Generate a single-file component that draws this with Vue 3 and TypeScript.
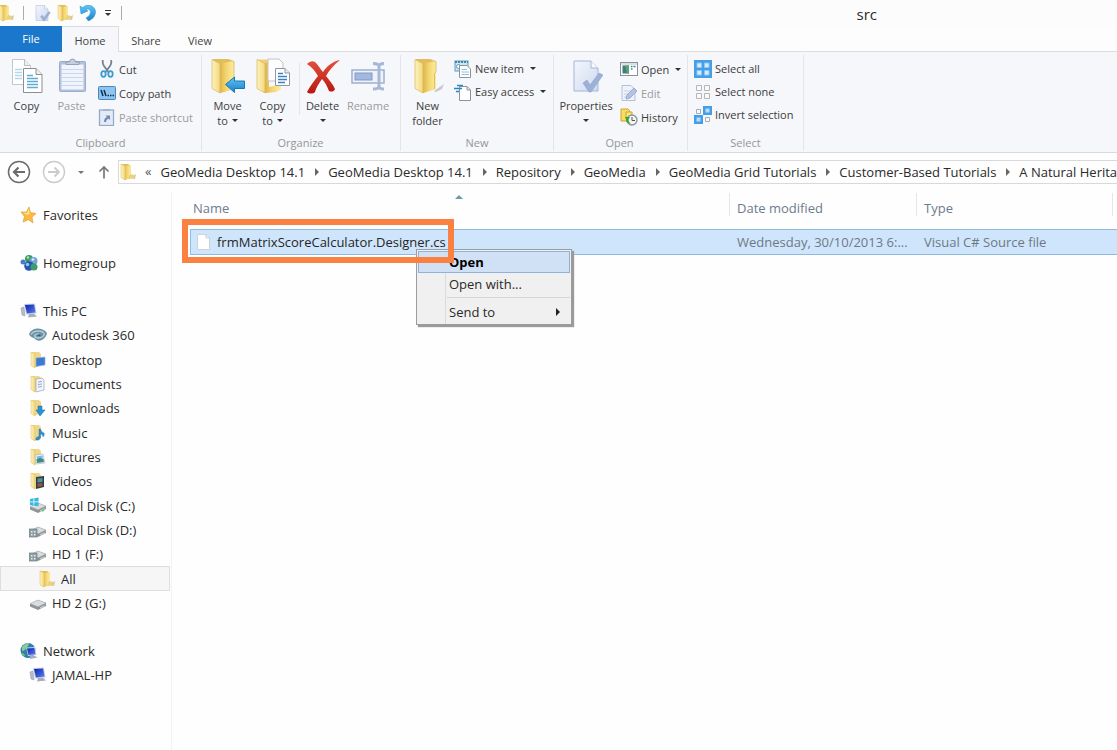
<script setup lang="ts">
import { ref } from 'vue'

interface SmallCommand { label: string; icon: string; disabled?: boolean; menu?: boolean }
interface BigCommand { lines: string[]; icon: string; disabled?: boolean; menu?: boolean; size?: string; divider?: boolean }
interface RibbonGroup { name: string; big: BigCommand[]; small: SmallCommand[] }
interface TreeItem { label: string; icon: string; level: number; selected?: boolean }

const tabs = ['Home', 'Share', 'View']
const activeTab = ref('Home')

const groups: RibbonGroup[] = [
  {
    name: 'Clipboard',
    big: [
      { lines: ['Copy'], icon: 'copy' },
      { lines: ['Paste'], icon: 'paste', disabled: true },
    ],
    small: [
      { label: 'Cut', icon: 'cut' },
      { label: 'Copy path', icon: 'copypath' },
      { label: 'Paste shortcut', icon: 'shortcut', disabled: true },
    ],
  },
  {
    name: 'Organize',
    big: [
      { lines: ['Move', 'to'], icon: 'moveto', menu: true },
      { lines: ['Copy', 'to'], icon: 'copyto', menu: true },
      { lines: ['Delete', ''], icon: 'delete', menu: true, divider: true },
      { lines: ['Rename'], icon: 'rename', disabled: true, size: 'mid' },
    ],
    small: [],
  },
  {
    name: 'New',
    big: [{ lines: ['New', 'folder'], icon: 'folder' }],
    small: [
      { label: 'New item', icon: 'newitem', menu: true },
      { label: 'Easy access', icon: 'easy', menu: true },
    ],
  },
  {
    name: 'Open',
    big: [{ lines: ['Properties', ''], icon: 'props', menu: true, size: 'wide' }],
    small: [
      { label: 'Open', icon: 'open', menu: true },
      { label: 'Edit', icon: 'edit', disabled: true },
      { label: 'History', icon: 'history' },
    ],
  },
  {
    name: 'Select',
    big: [],
    small: [
      { label: 'Select all', icon: 'selall' },
      { label: 'Select none', icon: 'selnone' },
      { label: 'Invert selection', icon: 'selinv' },
    ],
  },
]

const crumbs = [
  'GeoMedia Desktop 14.1',
  'GeoMedia Desktop 14.1',
  'Repository',
  'GeoMedia',
  'GeoMedia Grid Tutorials',
  'Customer-Based Tutorials',
  'A Natural Herita',
]

const tree: TreeItem[][] = [
  [{ label: 'Favorites', icon: 'star', level: 0 }],
  [{ label: 'Homegroup', icon: 'homegroup', level: 0 }],
  [
    { label: 'This PC', icon: 'pc', level: 0 },
    { label: 'Autodesk 360', icon: 'autodesk', level: 1 },
    { label: 'Desktop', icon: 'f-desktop', level: 1 },
    { label: 'Documents', icon: 'f-documents', level: 1 },
    { label: 'Downloads', icon: 'f-downloads', level: 1 },
    { label: 'Music', icon: 'f-music', level: 1 },
    { label: 'Pictures', icon: 'f-pictures', level: 1 },
    { label: 'Videos', icon: 'f-videos', level: 1 },
    { label: 'Local Disk (C:)', icon: 'disk-win', level: 1 },
    { label: 'Local Disk (D:)', icon: 'disk-net', level: 1 },
    { label: 'HD 1 (F:)', icon: 'disk-net', level: 1 },
    { label: 'All', icon: 'folder-s', level: 2, selected: true },
    { label: 'HD 2 (G:)', icon: 'disk', level: 1 },
  ],
  [
    { label: 'Network', icon: 'network', level: 0 },
    { label: 'JAMAL-HP', icon: 'pc', level: 1 },
  ],
]
</script>

<template>
  <svg class="sprite" aria-hidden="true">
    <defs>
      <linearGradient id="gold" x1="0" x2="1"><stop offset="0" stop-color="#dfb548" /><stop offset=".45" stop-color="#f3d672" /><stop offset="1" stop-color="#fcec9f" /></linearGradient>
      <linearGradient id="goldL" x1="0" x2="1"><stop offset="0" stop-color="#fdf3bf" /><stop offset="1" stop-color="#f3d87c" /></linearGradient>
      <linearGradient id="blue" x1="0" y1="0" x2="0" y2="1"><stop offset="0" stop-color="#5cc6f4" /><stop offset="1" stop-color="#1b80c8" /></linearGradient>
      <linearGradient id="red" x1="0" y1="0" x2="0" y2="1"><stop offset="0" stop-color="#e4503c" /><stop offset="1" stop-color="#b81712" /></linearGradient>
      <linearGradient id="steel" x1="0" y1="0" x2="1" y2="1"><stop offset="0" stop-color="#f3f6fc" /><stop offset="1" stop-color="#cfdaf0" /></linearGradient>
      <linearGradient id="screen" x1="0" y1="0" x2="1" y2="1"><stop offset="0" stop-color="#0b1fb0" /><stop offset="1" stop-color="#5b80ee" /></linearGradient>
    </defs>

    <symbol id="folder" viewBox="0 0 34 36">
      <path d="M23 33 L33 26 L31 31 L25 34Z" fill="#a9a9a6" opacity=".6" />
      <path d="M5 1.500 H19 L24 4 V31 L11 35Z" fill="#e3bd55" />
      <path d="M12 5.500 L25 3 V31 L12 35Z" fill="url(#gold)" />
      <path d="M4 1.500 L12 5.500 V35 L4 30.500Z" fill="url(#goldL)" stroke="#d9b55a" stroke-width=".7" />
      <path d="M5 1.500 H19.500 L25 3.500 V14 L23.500 15.500 V31" fill="none" stroke="#d8b65c" stroke-width=".8" />
    </symbol>
    <symbol id="moveto" viewBox="0 0 34 36">
      <path d="M2 1.500 H17 L23 4 V31 L9 35Z" fill="#e3bd55" />
      <path d="M9 5.500 L23 3 V31 L9 35Z" fill="url(#gold)" />
      <path d="M1 1.500 L9 5.500 V35 L1 30.500Z" fill="url(#goldL)" stroke="#d9b55a" stroke-width=".7" />
      <path d="M2 1.500 H17.500 L23 3.500 V20" fill="none" stroke="#d8b65c" stroke-width=".8" />
      <path d="M14.500 26.500 L23.500 19 V23 H33.500 V30.500 H23.500 V34.500Z" fill="url(#blue)" stroke="#1e74b6" stroke-width="1" />
    </symbol>
    <symbol id="copyto" viewBox="0 0 34 36">
      <path d="M2 1.500 H12 V30 L20 29 L24 32 L8 35Z" fill="#efd171" />
      <path d="M9 5.500 L13 4 V29 L25 26 V31 L20 34 L9 35Z" fill="url(#gold)" />
      <path d="M12 1 H23 L27 5 V23 H12Z" fill="#fdfdfd" stroke="#c2c2c2" />
      <path d="M1 1.500 L9 5.500 V35 L1 30.500Z" fill="url(#goldL)" stroke="#d9b55a" stroke-width=".7" />
      <path d="M19.500 10.500 H29 L33.500 15 V27.500 H19.500Z" fill="#fff" stroke="#8d98a5" />
      <path d="M29 10.500 V15 H33.500" fill="#e8eef4" stroke="#8d98a5" />
      <path d="M22 15.500 H27 M22 18.500 H31 M22 21.500 H31 M22 24.500 H29" stroke="#3b82c4" stroke-width="1.300" />
    </symbol>
    <symbol id="copy" viewBox="0 0 34 36">
      <path d="M2.500 1.500 H14.500 L20.500 7.500 V26.500 H2.500Z" fill="#fff" stroke="#c3c7ca" />
      <path d="M14.500 1.500 V7.500 H20.500" fill="#edf0f2" stroke="#b9bec2" />
      <path d="M5 11.500 H12 M5 14.500 H12 M5 17.500 H12 M5 20.500 H12" stroke="#b4d6e6" stroke-width="1.300" />
      <path d="M13.500 10.500 H26 L32 16.500 V34.500 H13.500Z" fill="#fff" stroke="#8b8f93" />
      <path d="M26 10.500 V16.500 H32" fill="#edf0f2" stroke="#8b8f93" />
      <path d="M17 17.500 H23 M17 20.500 H28 M17 23.500 H28 M17 26.500 H28 M17 29.500 H28" stroke="#5eadd2" stroke-width="1.400" />
    </symbol>
    <symbol id="paste" viewBox="0 0 34 36">
      <rect x="4.500" y="3.500" width="26" height="30" rx="1" fill="#b3c1dc" stroke="#9aabcb" />
      <rect x="6.500" y="6.500" width="22" height="25" fill="#f0f4fc" />
      <path d="M7 11.500 H28 M7 15.500 H28 M7 19.500 H28 M7 23.500 H28 M7 27.500 H28" stroke="#cbd6ea" />
      <path d="M11 6.500 V4 H14.500 Q14.500 1 17.500 1 Q20.500 1 20.500 4 H24 V6.500Z" fill="#c8cfdc" stroke="#8796b3" stroke-width=".8" />
    </symbol>
    <symbol id="delete" viewBox="0 0 34 36">
      <path d="M1 6 C5 2 8 3 10 5 C13 8 15 12 17 14 C21 8 27 3 34 2 C28 7 23 12 20 18 C23 22 27 26 29 31 C28 34 25 34 23 33 C21 28 19 24 16 21 C13 25 10 30 9 34 C7 36 3 36 1 34 C4 28 8 23 12 18 C9 13 6 9 1 6Z" fill="url(#red)" />
    </symbol>
    <symbol id="rename" viewBox="0 0 34 36">
      <rect x="1" y="12" width="32" height="13" fill="#eef2fa" stroke="#9eb0d0" stroke-width="1.500" />
      <rect x="4" y="15" width="17" height="7" fill="#a3b8de" stroke="#8199c8" />
      <path d="M22 5.500 Q28 5.500 28 8.500 Q28 5.500 33 5.500 M28 7 V29 M22 31 Q28 31 28 28 Q28 31 33 31" fill="none" stroke="#a7b7d5" stroke-width="3" />
    </symbol>
    <symbol id="props" viewBox="0 0 34 36">
      <path d="M5 3 H22 L29 10 V33 H5Z" fill="url(#steel)" stroke="#a3b6da" />
      <path d="M22 3 V10 H29" fill="#f8faff" stroke="#a3b6da" />
      <path d="M14 25 L18 22 L21 27 L30 15 L34 17 L22 34 H20Z" fill="#9db0d5" stroke="#8ea2cc" stroke-width=".6" />
    </symbol>
    <symbol id="cut" viewBox="0 0 18 18">
      <path d="M5 0 Q4 3 6 6 L10.500 12 M13 0 Q14 3 12 6 L7.500 12" stroke="#77828e" stroke-width="1.800" fill="none" />
      <ellipse cx="5.500" cy="14" rx="2.200" ry="2.800" fill="none" stroke="#3a9bd4" stroke-width="1.800" />
      <ellipse cx="12.500" cy="14" rx="2.200" ry="2.800" fill="none" stroke="#3a9bd4" stroke-width="1.800" />
    </symbol>
    <symbol id="copypath" viewBox="0 0 18 18">
      <rect x=".5" y="2.500" width="17" height="13" rx="1" fill="#8fc4ef" stroke="#4488c2" />
      <path d="M3 6 L5 12 M6 6 L8 12" stroke="#0e2f52" stroke-width="1.500" />
      <path d="M9.500 11.500 h1.500 M12 11.500 h1.500 M14.500 11.500 h1.500" stroke="#0e2f52" stroke-width="1.500" />
    </symbol>
    <symbol id="shortcut" viewBox="0 0 18 18">
      <rect x="1.500" y="2" width="14" height="15.500" fill="#e4ebf7" stroke="#98aaca" stroke-width="1.300" />
      <path d="M5 3 V1 H12 V3Z" fill="#a6b4cf" />
      <path d="M6 14 Q6 10 9 9 L7.500 7.500 H12 V12 L10.500 10.500 Q8 11.500 8 14Z" fill="#7288b4" />
    </symbol>
    <symbol id="newitem" viewBox="0 0 18 18">
      <rect x="1" y="1" width="13" height="10" fill="#cfe6f3" stroke="#5e9dc0" />
      <path d="M1 2 H14" stroke="#3f86ad" stroke-width="2" stroke-dasharray="2 1" />
      <circle cx="4.500" cy="6.500" r="2" fill="#fff" stroke="#5e9dc0" />
      <path d="M5.500 5.500 H13 L16.500 9 V17.500 H5.500Z" fill="#fff" stroke="#8b949b" />
      <path d="M7.500 9.500 H13 M7.500 12 H15 M7.500 14.500 H15" stroke="#8fc0dc" />
    </symbol>
    <symbol id="easy" viewBox="0 0 18 18">
      <path d="M5.500 3.500 H13 L16.500 7 V17.500 H5.500Z" fill="#fff" stroke="#8b949b" />
      <path d="M13 3.500 V7 H16.500" fill="none" stroke="#8b949b" />
      <path d="M3 2.500 H9 M0 5.500 H8 M2 8.500 H5" stroke="#2f86c6" stroke-width="1.700" />
    </symbol>
    <symbol id="open" viewBox="0 0 18 18">
      <rect x=".5" y="2.500" width="17" height="13" fill="#fff" stroke="#8a9298" />
      <path d="M1 4 H17" stroke="#b8c1c8" />
      <rect x="2.500" y="5.500" width="6.500" height="8" fill="#3b7c86" />
      <path d="M5 5.500 h4 v8 h-2z" fill="#62a06c" />
      <path d="M11 6.500 h1.500 M13.500 6.500 h2 M11 9 h1.500" stroke="#2b8a9a" stroke-width="1.500" />
    </symbol>
    <symbol id="edit" viewBox="0 0 18 18">
      <path d="M2 1.500 H11 L15 5.500 V16.500 H2Z" fill="#eef2fb" stroke="#b1c0de" />
      <path d="M4 7 H11 M4 10 H9 M4 13 H7" stroke="#c6d2ea" />
      <path d="M6 15 L7 11 L14 4 L17 7 L10 14Z" fill="#b4c3df" stroke="#97aad0" />
    </symbol>
    <symbol id="history" viewBox="0 0 18 18">
      <path d="M1 1 H8 L9.500 2.500 V13 H1Z" fill="#f7de63" stroke="#c9a62c" />
      <path d="M6 4 H12 V10 H6Z" fill="#fbe87e" stroke="#c9a62c" />
      <circle cx="12" cy="12" r="5" fill="#f2f5f2" stroke="#8b9499" stroke-width="1.300" />
      <path d="M12 9 V12.500 H15" fill="none" stroke="#4d5a60" />
      <path d="M5 9 L10 9 L8.700 11 Q8 14 11 15.500 Q6 16 6 11.500 Z" fill="#37a236" />
    </symbol>
    <symbol id="selall" viewBox="0 0 18 18">
      <rect width="18" height="18" fill="#459ee8" />
      <path d="M3 3h4.500v4.500h-4.500z M10.500 3h4.500v4.500h-4.500z M3 10.500h4.500v4.500h-4.500z M10.500 10.500h4.500v4.500h-4.500z" fill="#d6ebfb" stroke="#8ec5f2" />
    </symbol>
    <symbol id="selnone" viewBox="0 0 18 18">
      <path d="M2.500 2.500h5v5h-5z M10.500 2.500h5v5h-5z M2.500 10.500h5v5h-5z M10.500 10.500h5v5h-5z" fill="#fafafa" stroke="#b4b7ba" />
    </symbol>
    <symbol id="selinv" viewBox="0 0 18 18">
      <path d="M2.500 3.500h4v4h-4z M11.500 11.500h4v4h-4z" fill="#fafafa" stroke="#a9adb1" />
      <path d="M9 0h9v9h-9z M0 9h9v9h-9z" fill="#459ee8" />
      <path d="M11.500 2.500h4v4h-4z M2.500 11.500h4v4h-4z" fill="#b9dcf8" />
    </symbol>

    <symbol id="folder-s" viewBox="0 0 18 18">
      <path d="M11 15 L17 11 L16 16Z" fill="#c9b98a" opacity=".8" />
      <path d="M2 1 H9 L12 3 V15 L5 17Z" fill="#e3bd55" />
      <path d="M6 3 L12 2 V15 L5 17Z" fill="url(#gold)" />
      <path d="M2 1 L6 3 V17 L2 14.500Z" fill="url(#goldL)" stroke="#dcbc62" stroke-width=".5" />
      <path d="M11 11 L15 12 L15 15 L9 16Z" fill="#ecd07a" />
    </symbol>
    <symbol id="f-base" viewBox="0 0 18 18">
      <path d="M2 1 H10 L12 3 V14 L5 17Z" fill="#efd689" />
      <path d="M2 1 L6 3 V17 L2 14.500Z" fill="url(#goldL)" stroke="#dcbc62" stroke-width=".5" />
    </symbol>
    <symbol id="f-desktop" viewBox="0 0 18 18">
      <use href="#f-base" width="18" height="18" />
      <path d="M7 7 L16 6 V14 L7 15.500Z" fill="#3c79cf" stroke="#90b4e4" stroke-width=".7" />
    </symbol>
    <symbol id="f-documents" viewBox="0 0 18 18">
      <use href="#f-base" width="18" height="18" />
      <path d="M7 4 L13 3 L15 5 V15 L7 17Z" fill="#f1f4fa" stroke="#9ba3b6" stroke-width=".7" />
      <path d="M9 7 L13 6.500 M9 9.500 L13 9 M9 12 L13 11.500" stroke="#9aa6c8" />
    </symbol>
    <symbol id="f-downloads" viewBox="0 0 18 18">
      <use href="#f-base" width="18" height="18" />
      <path d="M9 7 H13 V11 H16 L11 17 L7 11 H9Z" fill="#2b93d2" stroke="#176ea8" stroke-width=".5" />
    </symbol>
    <symbol id="f-music" viewBox="0 0 18 18">
      <use href="#f-base" width="18" height="18" />
      <path d="M10 5 L11.500 5 Q12 8 15 9 Q16 11 14 13 Q14 10 11.500 10 V14 Q10 17 7 16 Q6 13 10 12.500Z" fill="#2d8fca" stroke="#1b6c9f" stroke-width=".4" />
    </symbol>
    <symbol id="f-pictures" viewBox="0 0 18 18">
      <use href="#f-base" width="18" height="18" />
      <path d="M6 7 L14 6 L16 15 L7 16Z" fill="#eaf3fa" stroke="#9fb1bf" stroke-width=".6" />
      <path d="M7.500 11 L11 9.500 L14.500 11 L15 14 L8 15Z" fill="#3f8a86" />
      <path d="M7.500 8.500 L13.500 7.500 L14 9.500 L8 10.500Z" fill="#79b7e4" />
    </symbol>
    <symbol id="f-videos" viewBox="0 0 18 18">
      <use href="#f-base" width="18" height="18" />
      <path d="M7 5 L15 4 V15 L7 17Z" fill="#343c46" />
      <path d="M8.500 6.500 L13.500 6 V10 L8.500 10.500Z" fill="#4b93a4" />
      <path d="M8.500 11.500 L13.500 11 V14 L8.500 15Z" fill="#8a5b3e" />
    </symbol>
    <symbol id="star" viewBox="0 0 18 18">
      <path d="M9 1 L10.500 6.500 L16 7.500 L12 11 L13 17 L8.500 13.700 L3 16 L4.500 10.500 L1 6 L6.500 6Z" fill="#fbb940" stroke="#e79f35" stroke-width=".7" />
      <path d="M8.800 3 L9.800 7.500 L7.500 9 L3 6.800 L7 7Z" fill="#fde39a" />
    </symbol>
    <symbol id="homegroup" viewBox="0 0 18 18">
      <circle cx="3" cy="8" r="2.500" fill="#3e7fd0" />
      <circle cx="9" cy="5" r="4" fill="#3b9a55" />
      <circle cx="13.500" cy="7" r="4" fill="#6fa4d8" />
      <circle cx="9" cy="12" r="4.800" fill="#2457b4" />
      <circle cx="14" cy="13" r="3.500" fill="#3f9c69" />
      <circle cx="7.500" cy="10.500" r="1.700" fill="#9dc3f2" />
      <circle cx="8" cy="3.500" r="1.300" fill="#b3e2b9" />
      <circle cx="13" cy="5.500" r="1.300" fill="#dcebfa" />
    </symbol>
    <symbol id="pc" viewBox="0 0 18 18">
      <path d="M1 6 L4 5 L5 14 L2 13Z" fill="#b6bcc8" stroke="#8d94a3" stroke-width=".5" />
      <path d="M4 2 L15 1.500 L16.500 11.500 L6 12.500Z" fill="#c9d1e4" />
      <path d="M5 3 L14 2.500 L15.500 10.500 L7 11.500Z" fill="url(#screen)" />
      <path d="M9 12 L14 11.800 L17 14.500 L8 15.500Z" fill="#a6adbb" />
    </symbol>
    <symbol id="autodesk" viewBox="0 0 18 18">
      <path d="M0 8 Q2 3 8 2.500 Q15 2.500 18 7 Q17.500 11 13 14 Q8 16 5 12 Q1 11 0 8Z" fill="#6d92a3" />
      <path d="M2 8.500 Q4 5 9 5 Q14 5 15.500 8 Q14 12 9 12 Q6 12 5.500 9.500 Q7 7.500 10 8" fill="none" stroke="#b4cdd8" stroke-width="1.300" />
      <path d="M8 9 Q10 8 12 9.500 Q10 11 8 9Z" fill="#2b5a78" />
    </symbol>
    <symbol id="disk" viewBox="0 0 18 18">
      <path d="M1 10 L9 6 L17 9 V12 L9 16 L1 12.500Z" fill="#8f9497" />
      <path d="M1 9.500 L9 6 L17 9 L9 12.700Z" fill="#dadddf" stroke="#a5a9ac" stroke-width=".5" />
      <path d="M11 14 L15.500 11.800" stroke="#d9dcde" />
    </symbol>
    <symbol id="disk-win" viewBox="0 0 18 18">
      <use href="#disk" width="18" height="18" />
      <path d="M1 2 L4.500 1.300 V4.500 H1Z M5.300 1.200 L9.500 .5 V4.500 H5.300Z M1 5.300 H4.500 V8.500 L1 8Z M5.300 5.300 H9.500 V9.300 L5.300 8.700Z" fill="#35b8e2" />
      <path d="M13 14 l2 -1" stroke="#56c45a" stroke-width="1.500" />
    </symbol>
    <symbol id="disk-net" viewBox="0 0 18 18">
      <use href="#disk" width="18" height="18" />
      <rect x="0" y="8" width="8" height="8" fill="#8fa0a5" stroke="#6e7d82" stroke-width=".7" />
      <path d="M2 10 h1.500 v1.500 h-1.500z M5 10 h1.500 v1.500 h-1.500z M2 13 h1.500 v1.500 h-1.500z M5 13 h1.500 v1.500 h-1.500z" fill="#e5ecee" />
    </symbol>
    <symbol id="network" viewBox="0 0 18 18">
      <circle cx="8" cy="8.500" r="7.500" fill="#2c7fae" />
      <path d="M2 5 Q5 1 9 1 Q9 4 6 6 Q5 9 2 9Z" fill="#83cf8f" />
      <path d="M1 11 Q4 10 5 14 Q4 15 2 13Z" fill="#63b876" />
      <path d="M6 5.500 L15 5 L16.500 13 L8 14Z" fill="#c9d1e4" />
      <path d="M7 6.500 L14.300 6 L15.500 12.200 L8.500 13Z" fill="url(#screen)" />
      <path d="M10 14 L14 13.600 L17.500 15.500 L10 17Z" fill="#a6adbb" />
    </symbol>
    <symbol id="file" viewBox="0 0 18 18">
      <path d="M2.500 1.500 H11 L14.500 5 V16.500 H2.500Z" fill="#fff" stroke="#ccd3da" />
      <path d="M11 1.500 V5 H14.500" fill="none" stroke="#c7cdd3" />
    </symbol>
    <symbol id="undo" viewBox="0 0 18 18">
      <path d="M1 2 L2 10 L9 7 L6.500 5.500 Q11 4 11.500 8 Q11.500 11.500 7 14 L9.500 17 Q17 13.500 16.500 7 Q15 .5 7 1.500 L3.500 3.500Z" fill="url(#blue)" stroke="#2f8aca" stroke-width=".5" />
    </symbol>
    <symbol id="back" viewBox="0 0 24 24">
      <circle cx="12" cy="12" r="10.500" fill="#fff" stroke="currentColor" stroke-width="1.500" />
      <path d="M18 12 H7 M11.500 7.500 L7 12 L11.500 16.500" fill="none" stroke="currentColor" stroke-width="2.200" />
    </symbol>
    <symbol id="forward" viewBox="0 0 24 24">
      <circle cx="12" cy="12" r="10.500" fill="#fff" stroke="currentColor" stroke-width="1.400" />
      <path d="M6 12 H17 M12.500 7.500 L17 12 L12.500 16.500" fill="none" stroke="currentColor" stroke-width="1.800" />
    </symbol>
    <symbol id="up" viewBox="0 0 12 14">
      <path d="M6 13.500 V2 M1.500 6.500 L6 2 L10.500 6.500" fill="none" stroke="currentColor" stroke-width="1.700" />
    </symbol>
  </svg>

  <div class="window">
    <header class="titlebar">
      <div class="quick">
        <svg class="ic quick-folder"><use href="#folder-s" /></svg>
        <i class="bar"></i>
        <button aria-label="Properties"><svg class="ic"><use href="#props" /></svg></button>
        <button aria-label="New folder"><svg class="ic"><use href="#folder-s" /></svg></button>
        <button aria-label="Undo"><svg class="ic"><use href="#undo" /></svg></button>
        <button class="customize" aria-label="Customize Quick Access Toolbar"><i class="caret"></i></button>
        <i class="bar"></i>
      </div>
      <h1>src</h1>
    </header>

    <nav class="tabs">
      <button class="file-tab">File</button>
      <button v-for="t in tabs" :key="t" class="tab" :class="{ active: t === activeTab }" @click="activeTab = t">{{ t }}</button>
    </nav>

    <section class="ribbon">
      <div v-for="g in groups" :key="g.name" class="group" :class="g.name.toLowerCase()">
        <div class="commands">
          <button v-for="b in g.big" :key="b.icon" class="big" :class="[b.size, { divider: b.divider }]" :disabled="b.disabled">
            <svg class="ic-big"><use :href="'#' + b.icon" /></svg>
            <span v-for="(line, n) in b.lines" :key="n" class="line">{{ line }}<i v-if="b.menu && n === 1" class="caret"></i></span>
          </button>
          <div v-if="g.small.length" class="stack">
            <button v-for="s in g.small" :key="s.label" class="small" :disabled="s.disabled">
              <svg class="ic"><use :href="'#' + s.icon" /></svg>
              <span>{{ s.label }}</span>
              <i v-if="s.menu" class="caret"></i>
            </button>
          </div>
        </div>
        <div class="group-name">{{ g.name }}</div>
      </div>
    </section>

    <div class="address-row">
      <button class="round" aria-label="Back"><svg><use href="#back" /></svg></button>
      <button class="round off" aria-label="Forward"><svg><use href="#forward" /></svg></button>
      <button class="recent" aria-label="Recent locations"><i class="caret"></i></button>
      <button class="up" aria-label="Up"><svg><use href="#up" /></svg></button>
      <div class="address">
        <svg class="ic"><use href="#folder-s" /></svg>
        <span class="more">«</span>
        <template v-for="(c, i) in crumbs" :key="i">
          <a href="#" @click.prevent>{{ c }}</a><i v-if="i < crumbs.length - 1" class="arrow"></i>
        </template>
      </div>
    </div>

    <div class="body">
      <aside class="tree">
        <ul v-for="(group, i) in tree" :key="i">
          <li v-for="item in group" :key="item.label" :class="['level' + item.level, { selected: item.selected }]">
            <svg class="ic"><use :href="'#' + item.icon" /></svg>
            <a href="#" @click.prevent>{{ item.label }}</a>
          </li>
        </ul>
      </aside>

      <main class="files">
        <table>
          <colgroup><col class="c-name" /><col class="c-date" /><col class="c-type" /><col /></colgroup>
          <thead>
            <tr>
              <th class="sorted"><span>Name</span></th>
              <th><span>Date modified</span></th>
              <th><span>Type</span></th>
              <td></td>
            </tr>
          </thead>
          <tbody>
            <tr>
              <td class="name"><div><svg class="ic"><use href="#file" /></svg>frmMatrixScoreCalculator.Designer.cs</div></td>
              <td>Wednesday, 30/10/2013 6:...</td>
              <td>Visual C# Source file</td>
              <td></td>
            </tr>
          </tbody>
        </table>

        <div class="menu" role="menu">
          <button class="hot" role="menuitem">Open</button>
          <button role="menuitem">Open with...</button>
          <hr />
          <button role="menuitem">Send to<i class="arrow"></i></button>
        </div>
        <div class="highlight"></div>
      </main>
    </div>
  </div>
</template>

<style>
html, body, #app { height: 100%; margin: 0; }
body { background: #fefefe; }
</style>

<style scoped>
.sprite { position: absolute; width: 0; height: 0; }
.window {
  min-height: 100%;
  display: flex;
  flex-direction: column;
  overflow: hidden;
  background: #fefefe;
  color: #2a2a2a;
  font: 13px/16px "Open Sans", "Noto Sans", sans-serif;
}
button { border: 0; padding: 0; margin: 0; background: none; color: inherit; font: inherit; }
a { color: inherit; text-decoration: none; white-space: nowrap; }
svg { display: block; flex: none; }
.ic { width: 18px; height: 18px; }
.caret { display: inline-block; flex: none; border: 3px solid transparent; border-top-color: #333; border-bottom: 0; }
.arrow { flex: none; border: 4px solid transparent; border-left-color: #666; border-right: 0; }

.titlebar { display: flex; align-items: center; height: 26px; background: #fcfcfd; }
.quick { display: flex; align-items: center; }
.quick-folder { margin-left: -3px; }
.quick .bar { width: 1px; height: 14px; margin: 0 9px 0 8px; background: #aaa; }
.quick button { margin-right: 5px; }
.quick .customize { display: flex; flex-direction: column; align-items: center; gap: 2px; margin: 0 2px 0 3px; }
.customize::before { content: ""; width: 6px; height: 1px; background: #333; }
h1 { margin: 2px 240px 0 auto; font-size: 15px; line-height: 20px; font-weight: 400; }

.tabs { display: flex; height: 26px; background: #fdfdfd; font-size: 11px; color: #444; box-shadow: inset 0 -1px #dcdde0; }
.file-tab { width: 62px; background: #1a77cb; color: #fff; }
.tab { width: 54px; padding-top: 4px; }
.tab.active { width: 57px; background: #f5f7fa; border: 1px solid #dcdde0; border-width: 1px 1px 0 0; padding-top: 3px; }

.ribbon { display: flex; height: 100px; background: #f5f7fa; border-bottom: 1px solid #d8dadd; font-size: 11px; line-height: 15px; color: #3c3c3c; }
.group { display: flex; flex-direction: column; justify-content: space-between; margin: 3px 0 1px; padding: 0 4px; border-right: 1px solid #e3e5e9; box-sizing: border-box; }
.clipboard { width: 202px; }
.organize { width: 199px; padding-left: 3px; }
.new { width: 153px; }
.open { width: 134px; padding-left: 2px; }
.select { width: 116px; }
.commands { display: flex; align-items: flex-start; }
.group-name { text-align: center; color: #969696; line-height: 16px; }
.big { width: 45px; display: flex; flex-direction: column; align-items: center; padding-top: 3px; }
.big.mid { width: 48px; }
.big.wide { width: 60px; }
.big.divider { margin-left: 4px; padding-left: 2px; background: linear-gradient(#e3e5e9, #e3e5e9) 0 8px / 1px 52px no-repeat; }
.ic-big { width: 34px; height: 36px; margin-bottom: 4px; }
.line { min-height: 15px; white-space: nowrap; }
.line .caret { margin: 0 0 3px 4px; }
.big.divider .caret, .big.wide .caret { margin-left: 0; }
.stack { display: flex; flex-direction: column; padding: 2px 0 0 4px; }
.select .stack { padding-left: 2px; }
.small { display: flex; align-items: center; height: 24px; gap: 3px; white-space: nowrap; }
.new .small, .select .small { height: 23px; }
.small .caret { margin-left: 3px; }
button:disabled { color: #9b9b9b; }

.address-row { display: flex; align-items: center; height: 38px; }
.round { margin-left: 7px; color: #6c6c6c; }
.round svg { width: 24px; height: 24px; }
.round.off { margin-left: 11px; color: #cbcbcb; }
.recent { display: flex; margin-left: 12px; }
.recent .caret { border-top-color: #777; }
.up { margin-left: 14px; color: #777; }
.up svg { width: 12px; height: 14px; }
.address { flex: 1; min-width: 0; display: flex; align-items: center; height: 22px; margin-left: 8px; border: 1px solid #d9d9d9; border-right: 0; overflow: hidden; }
.more { margin: 0 9px 3px 8px; color: #555; }
.address .arrow { margin: 0 9px 0 10px; }

.body { flex: 1; display: flex; }
.tree { width: 172px; flex: none; display: flex; flex-direction: column; gap: 24px; padding: 12px 1px 0 0; border-right: 1px solid #f3f3f3; box-sizing: border-box; }
.tree ul { list-style: none; margin: 0; padding: 0; display: grid; grid-auto-rows: 1fr; }
.tree ul:nth-child(3) { min-height: 316px; }
.tree li { display: flex; align-items: center; min-height: 24px; gap: 5px; padding-left: 20px; box-sizing: border-box; }
.tree .level1 { padding-left: 29px; }
.tree .level2 { padding-left: 38px; }
.tree .selected { background: #f6f6f6; border: 1px solid #dedede; padding-left: 37px; }

.files { flex: 1; min-width: 0; position: relative; padding-left: 18px; }
table { width: 100%; table-layout: fixed; border-spacing: 0; }
.c-name { width: 540px; }
.c-date { width: 187px; }
.c-type { width: 196px; }
th { height: 38px; padding: 0; text-align: left; vertical-align: top; font-weight: 400; color: #6d7b8c; position: relative; }
th span { display: block; margin-top: 2px; padding: 4px 7px 0; line-height: 23px; height: 23px; box-sizing: border-box; border-right: 1px solid #e6e6e6; }
th.sorted span { padding-left: 3px; }
th.sorted::after { content: ""; position: absolute; left: 49%; top: 4px; border: 4px solid transparent; border-bottom-color: #6f98a8; border-top: 0; }
tbody td { height: 24px; padding: 0 7px; background: #cfe5fc; border: 1px solid #8fbbdc; border-width: 1px 0; color: #6e7885; white-space: nowrap; overflow: hidden; }
tbody .name { border-left-width: 1px; padding-left: 4px; color: #262626; }
.name div { display: flex; align-items: center; gap: 4px; }

.menu { position: absolute; left: 244px; top: 58px; width: 156px; box-sizing: border-box; padding: 1px; background: linear-gradient(90deg, transparent 28px, #dadada 28px, #dadada 29px, transparent 29px) #f0f0f0; border: 1px solid #9c9c9c; box-shadow: 2px 2px 1px #9a9a9a; }
.menu button { display: flex; align-items: center; justify-content: space-between; width: 100%; height: 22px; padding: 0 9px 0 30px; border: 1px solid transparent; }
.menu .hot { font-weight: 700; color: #000; background: #d0e1f5; border-color: #8fb2d9; }
.menu hr { margin: 2px 0 3px 29px; border: 0; border-top: 1px solid #d5d5d5; }
.menu .arrow { border-left-color: #222; }
.highlight { position: absolute; left: 10px; top: 28px; width: 272px; height: 44px; box-sizing: border-box; border: 6px solid #fb8142; pointer-events: none; }
</style>
